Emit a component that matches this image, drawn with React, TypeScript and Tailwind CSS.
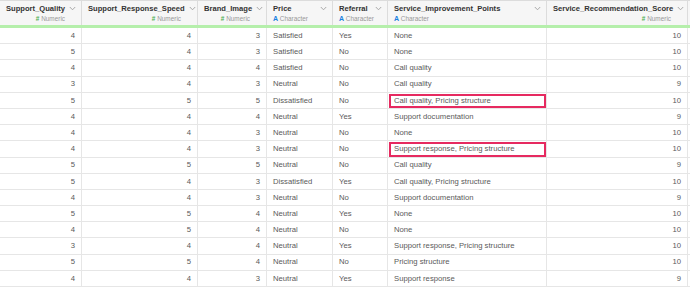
const columns = [
  { name: "Support_Quality", type: "Numeric", width: "w-[82px]" },
  { name: "Support_Response_Speed", type: "Numeric", width: "w-[116px]" },
  { name: "Brand_Image", type: "Numeric", width: "w-[69px]" },
  { name: "Price", type: "Character", width: "w-[66px]" },
  { name: "Referral", type: "Character", width: "w-[55px]" },
  { name: "Service_Improvement_Points", type: "Character", width: "w-[159px]" },
  { name: "Service_Recommendation_Score", type: "Numeric", width: "w-[141px]" },
];

const rows: (string | number)[][] = [
  [4, 4, 3, "Satisfied", "Yes", "None", 10],
  [5, 4, 3, "Satisfied", "No", "None", 10],
  [4, 4, 4, "Satisfied", "No", "Call quality", 10],
  [3, 4, 3, "Neutral", "No", "Call quality", 9],
  [5, 5, 5, "Dissatisfied", "No", "Call quality, Pricing structure", 10],
  [4, 4, 4, "Neutral", "Yes", "Support documentation", 9],
  [4, 4, 3, "Neutral", "No", "None", 10],
  [4, 4, 3, "Neutral", "No", "Support response, Pricing structure", 10],
  [5, 5, 5, "Neutral", "No", "Call quality", 9],
  [5, 4, 3, "Dissatisfied", "Yes", "Call quality, Pricing structure", 10],
  [4, 4, 3, "Neutral", "No", "Support documentation", 9],
  [5, 5, 4, "Neutral", "Yes", "None", 10],
  [4, 5, 4, "Neutral", "No", "None", 10],
  [3, 4, 4, "Neutral", "Yes", "Support response, Pricing structure", 10],
  [5, 5, 4, "Neutral", "No", "Pricing structure", 10],
  [4, 4, 3, "Neutral", "Yes", "Support response", 9],
];

// rows with the red outline on Service_Improvement_Points
const highlighted = [4, 7];

const Chevron = () => (
  <svg width="7" height="5" viewBox="0 0 7 5" className="shrink-0">
    <polyline points="0.8,1 3.5,3.8 6.2,1" fill="none" stroke="#a0a0a0" strokeWidth="0.9" />
  </svg>
);

const HeaderCell = ({ name, type, width }: { name: string; type: string; width: string }) => {
  const numeric = type === "Numeric";
  return (
    <div className={`${width} shrink-0 h-full border-r border-[#dcdcdc] flex flex-col justify-center pl-[6px] pr-[5px]`}>
      <div className="flex items-center justify-between gap-1">
        <span className="text-[7.6px] font-bold text-[#333] leading-[10px] whitespace-nowrap">{name}</span>
        <Chevron />
      </div>
      <div className={`flex mt-[1px] text-[6.4px] leading-[8px] whitespace-nowrap ${numeric ? "justify-end pr-[11px]" : "justify-start"}`}>
        {numeric ? (
          <span><span className="text-[#4caf50] font-bold">#</span> <span className="text-[#999]">Numeric</span></span>
        ) : (
          <span><span className="text-[#1a7fe0] font-bold text-[7px]">A</span><span className="text-[#999]"> Character</span></span>
        )}
      </div>
    </div>
  );
};

export default function App() {
  return (
    <div className="w-[690px] h-[291px] overflow-hidden bg-white font-['Liberation_Sans',Arial,sans-serif]">
      <div className="flex h-[25px] bg-[#f6f6f6] border-t border-[#dcdcdc]">
        {columns.map((c) => (
          <HeaderCell key={c.name} {...c} />
        ))}
      </div>
      <div className="h-[3px] bg-[#b5efab]" />
      {rows.map((r, i) => (
        <div key={i} className="flex h-[16.2px] border-b border-[#e6e6e6]">
          {r.map((v, j) => {
            const numeric = columns[j].type === "Numeric";
            return (
              <div
                key={j}
                className={`${columns[j].width} shrink-0 relative border-r border-[#e6e6e6] flex items-center text-[7.7px] text-[#5a5a5a] whitespace-nowrap ${numeric ? "justify-end pr-[6px]" : "justify-start pl-[6px]"}`}
              >
                {v}
                {j === 5 && highlighted.includes(i) && (
                  <div className="absolute top-[1px] bottom-[0px] left-[1px] right-[0px] border-2 border-[#e62a60]" />
                )}
              </div>
            );
          })}
        </div>
      ))}
    </div>
  );
}
